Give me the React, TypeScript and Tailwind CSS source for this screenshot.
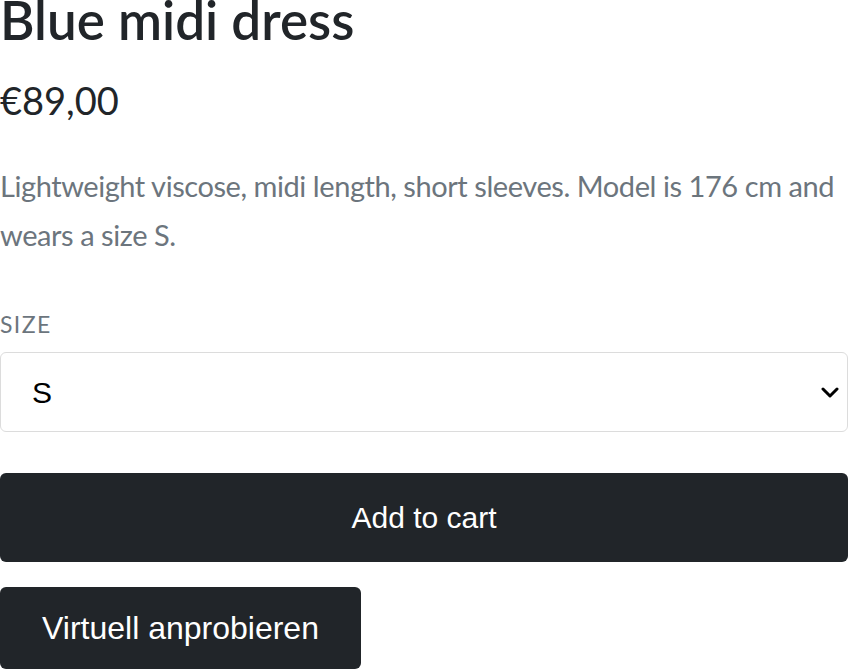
import React from "react";

const sans = "font-['Lato','Noto_Sans',sans-serif]";
const arial = "font-['Liberation_Sans',Arial,sans-serif]";

const ProductInfo = () => {
  return (
    <div className={`w-[848px] h-[669px] overflow-hidden bg-white ${sans}`}>
      {/* Title + price */}
      <h1 className="text-[53px] leading-[40px] font-semibold text-[#212529]">
        Blue midi dress
      </h1>
      <div className="mt-[37px] text-[38px] leading-[46px] text-[#212529]">€89,00</div>

      {/* Description */}
      <p className="mt-[38px] text-[29px] leading-[49px] tracking-[-0.015em] text-[#6c757d]">
        Lightweight viscose, midi length, short sleeves. Model is 176 cm and wears a size S.
      </p>

      {/* Size select */}
      <label className="mt-[50px] block text-[23px] leading-[30px] tracking-[0.06em] uppercase text-[#6c757d]">
        Size
      </label>
      <div className="relative mt-[13px]">
        <select
          defaultValue="S"
          className={`block h-[80px] w-full appearance-none rounded-[6px] border border-[#dcdcdc] bg-white pl-[31px] text-[30px] text-black ${arial}`}
        >
          <option>XS</option>
          <option>S</option>
          <option>M</option>
          <option>L</option>
        </select>
        <svg
          className="pointer-events-none absolute right-[9px] top-[35px]"
          width="18"
          height="11"
          viewBox="0 0 18 11"
          fill="none"
        >
          <path d="M2 2 L9 9 L16 2" stroke="#000" strokeWidth="3" strokeLinecap="round" strokeLinejoin="round" />
        </svg>
      </div>

      {/* Actions */}
      <button
        className={`mt-[41px] flex h-[89px] w-full items-center justify-center rounded-[6px] bg-[#212529] text-[30px] text-white ${arial}`}
      >
        Add to cart
      </button>
      <button
        className={`mt-[25px] flex h-[82px] items-center rounded-[6px] bg-[#212529] px-[42px] text-[32px] text-white ${arial}`}
      >
        Virtuell anprobieren
      </button>
    </div>
  );
};

export default function App() {
  return <ProductInfo />;
}
